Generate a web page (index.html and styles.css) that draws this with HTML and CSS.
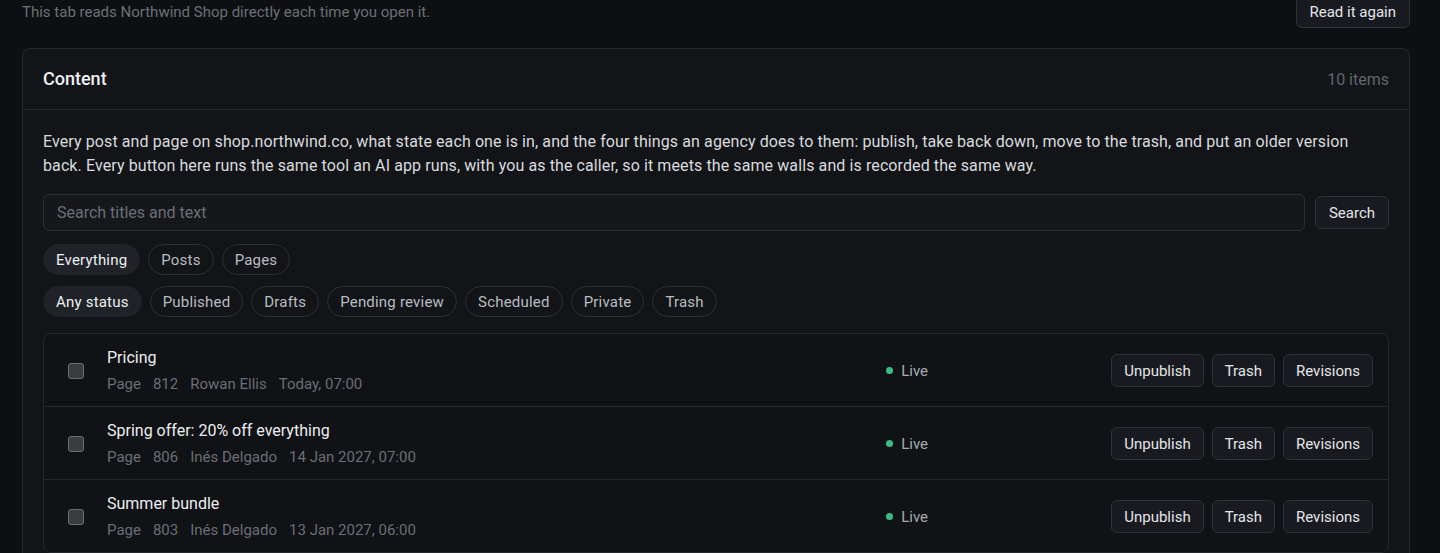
FILE: index.html
```html
<!DOCTYPE html>
<html lang="en">
<head>
    <meta charset="UTF-8">
    <meta name="viewport" content="width=device-width, initial-scale=1.0">
    <title>Northwind Shop - Content</title>
    <link rel="stylesheet" href="styles.css">
</head>
<body>
    <div class="page">
        <div class="topline">
            <p class="note">This tab reads Northwind Shop directly each time you open it.</p>
            <button class="btn">Read it again</button>
        </div>

        <section class="card">
            <header class="card-head">
                <h2>Content</h2>
                <span class="count">10 items</span>
            </header>

            <div class="card-body">
                <p class="intro">Every post and page on shop.northwind.co, what state each one is in, and the four things an agency does to them: publish, take back down, move to the trash, and put an older version back. Every button here runs the same tool an AI app runs, with you as the caller, so it meets the same walls and is recorded the same way.</p>

                <form class="search" onsubmit="return false">
                    <input type="text" class="search-input" placeholder="Search titles and text">
                    <button class="btn">Search</button>
                </form>

                <div class="chips">
                    <button class="chip active">Everything</button>
                    <button class="chip">Posts</button>
                    <button class="chip">Pages</button>
                </div>
                <div class="chips">
                    <button class="chip active">Any status</button>
                    <button class="chip">Published</button>
                    <button class="chip">Drafts</button>
                    <button class="chip">Pending review</button>
                    <button class="chip">Scheduled</button>
                    <button class="chip">Private</button>
                    <button class="chip">Trash</button>
                </div>

                <div class="list">
                    <div class="row">
                        <span class="check"></span>
                        <div class="info">
                            <div class="title">Pricing</div>
                            <div class="meta"><span>Page</span><span class="num">812</span><span>Rowan Ellis</span><span>Today, 07:00</span></div>
                        </div>
                        <div class="state"><span class="dot"></span>Live</div>
                        <div class="actions">
                            <button class="btn">Unpublish</button>
                            <button class="btn">Trash</button>
                            <button class="btn">Revisions</button>
                        </div>
                    </div>
                    <div class="row">
                        <span class="check"></span>
                        <div class="info">
                            <div class="title">Spring offer: 20% off everything</div>
                            <div class="meta"><span>Page</span><span class="num">806</span><span>Inés Delgado</span><span>14 Jan 2027, 07:00</span></div>
                        </div>
                        <div class="state"><span class="dot"></span>Live</div>
                        <div class="actions">
                            <button class="btn">Unpublish</button>
                            <button class="btn">Trash</button>
                            <button class="btn">Revisions</button>
                        </div>
                    </div>
                    <div class="row">
                        <span class="check"></span>
                        <div class="info">
                            <div class="title">Summer bundle</div>
                            <div class="meta"><span>Page</span><span class="num">803</span><span>Inés Delgado</span><span>13 Jan 2027, 06:00</span></div>
                        </div>
                        <div class="state"><span class="dot"></span>Live</div>
                        <div class="actions">
                            <button class="btn">Unpublish</button>
                            <button class="btn">Trash</button>
                            <button class="btn">Revisions</button>
                        </div>
                    </div>
                </div>
            </div>
        </section>
    </div>
</body>
</html>
```

FILE: styles.css
```css
* {
    margin: 0;
    padding: 0;
    box-sizing: border-box;
}

html, body {
    height: 100%;
    overflow: hidden;
}

body {
    font-family: Roboto, 'Noto Sans', sans-serif;
    background-color: #0e0f12;
    color: #e4e6e9;
    font-size: 16px;
}

.page {
    padding: 0 30px 0 22px;
}

button {
    font-family: inherit;
}

.topline {
    display: flex;
    align-items: center;
    justify-content: space-between;
    margin-top: -4px;
}

.note {
    color: #6b6f76;
    font-size: 15px;
    line-height: 24px;
}

.btn {
    background-color: #181a1f;
    color: #e4e6e9;
    border: 1px solid #2e3137;
    border-radius: 6px;
    height: 33px;
    padding: 0 12px;
    font-size: 15px;
    cursor: pointer;
}

.topline .btn {
    height: 32px;
    padding: 0 13px;
}

.card {
    margin-top: 20px;
    background-color: #121418;
    border: 1px solid #25282d;
    border-radius: 8px;
}

.card-head {
    display: flex;
    align-items: center;
    justify-content: space-between;
    padding: 18px 20px;
    border-bottom: 1px solid #25282d;
}

.card-head h2 {
    font-size: 18px;
    font-weight: 500;
    line-height: 24px;
    color: #eef0f2;
}

.count {
    color: #62666d;
    font-size: 16px;
}

.card-body {
    padding: 20px 20px 20px;
}

.intro {
    line-height: 24px;
    letter-spacing: 0.1px;
    color: #d9dbde;
}

.search {
    display: flex;
    align-items: center;
    gap: 10px;
    margin-top: 16px;
}

.search-input {
    flex: 1;
    height: 37px;
    padding: 0 13px;
    background-color: #15171b;
    border: 1px solid #2c2f35;
    border-radius: 6px;
    color: #e4e6e9;
    font-family: inherit;
    font-size: 16px;
}

.search-input::placeholder {
    color: #6b6f76;
}

.search .btn {
    height: 33px;
    padding: 0 13px;
}

.chips {
    display: flex;
    gap: 8px;
    margin-top: 13px;
}

.chips + .chips {
    margin-top: 11px;
}

.chip {
    background: transparent;
    color: #b9bcc1;
    border: 1px solid #2c2f35;
    border-radius: 16px;
    height: 31px;
    padding: 0 12px;
    font-size: 15px;
    letter-spacing: 0.2px;
    cursor: pointer;
}

.chip.active {
    background-color: #1f2227;
    border-color: #1f2227;
    color: #eef0f2;
}

.list {
    margin-top: 16px;
    border: 1px solid #25282d;
    border-radius: 8px;
    background-color: #101216;
}

.row {
    display: grid;
    grid-template-columns: 16px 1fr 202px auto;
    column-gap: 23px;
    align-items: center;
    padding: 13px 15px 12px 24px;
    border-bottom: 1px solid #25282d;
}

.row:last-child {
    border-bottom: none;
}

.check {
    width: 16px;
    height: 16px;
    border: 1.5px solid #6a6d72;
    background-color: #3a3c40;
    border-radius: 3px;
}

.title {
    font-size: 16px;
    line-height: 22px;
    color: #eceef0;
}

.meta {
    display: flex;
    gap: 12px;
    margin-top: 5px;
    font-size: 15px;
    line-height: 20px;
    color: #6a6e75;
}

.num {
    font-variant-numeric: tabular-nums;
}

.state {
    display: flex;
    align-items: center;
    gap: 8px;
    font-size: 15px;
    color: #a6a9ae;
}

.dot {
    width: 7px;
    height: 7px;
    border-radius: 50%;
    background-color: #3dbb82;
}

.actions {
    display: flex;
    gap: 8px;
}
```
